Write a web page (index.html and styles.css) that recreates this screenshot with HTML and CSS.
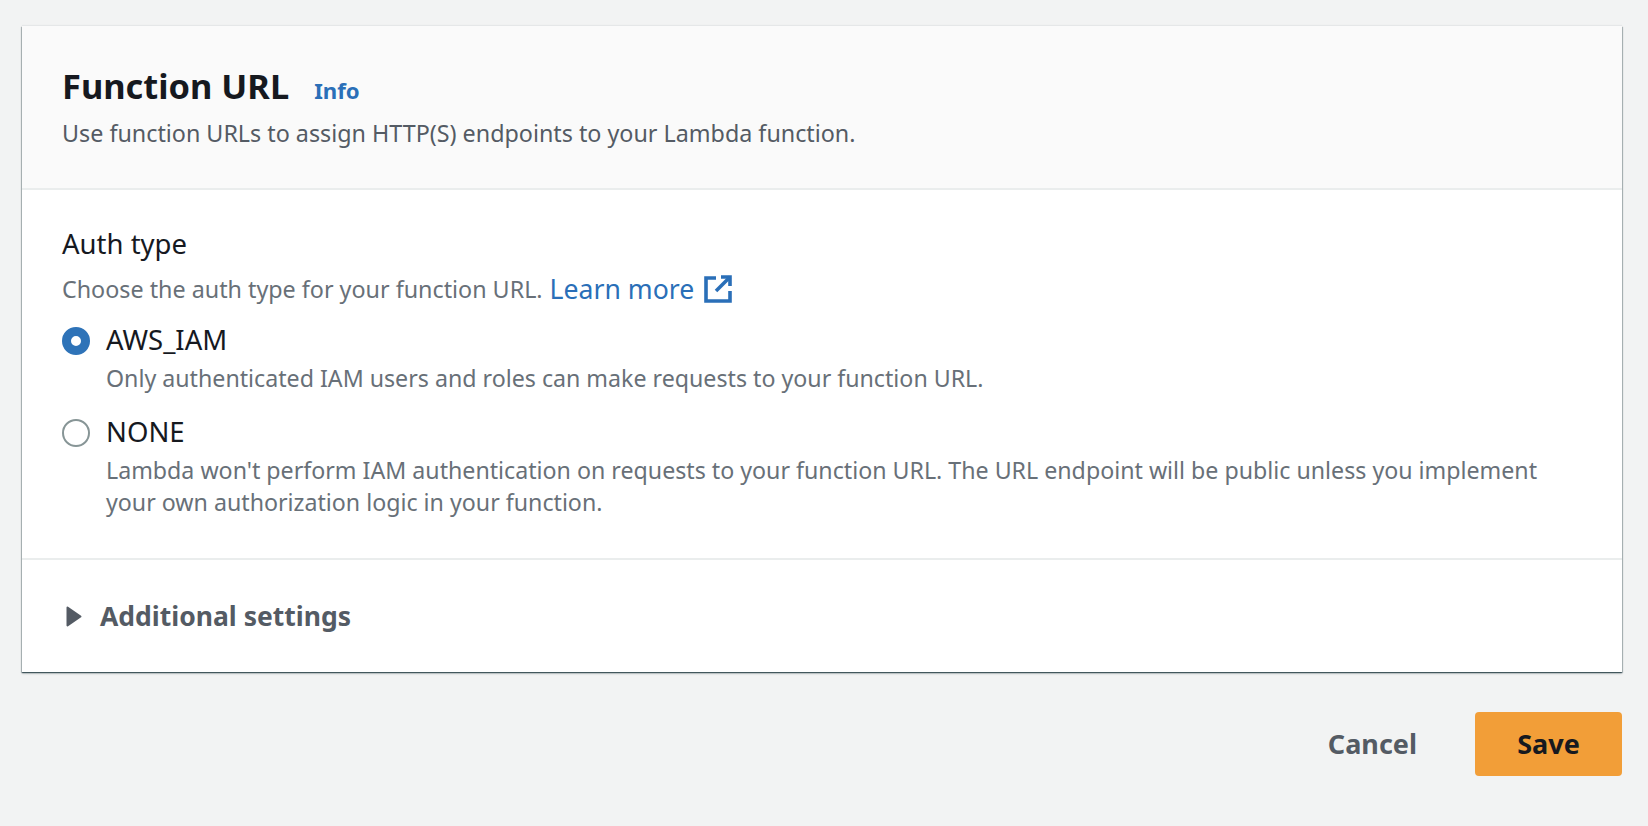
FILE: index.html
```html
<!DOCTYPE html>
<html lang="en">
<head>
<meta charset="utf-8">
<title>Function URL</title>
<link rel="stylesheet" href="styles.css">
</head>
<body>
<main class="page">
  <section class="card">
    <header class="card-head">
      <h2 class="title-row"><span class="title">Function URL</span><a class="info">Info</a></h2>
      <p class="subtitle">Use function URLs to assign HTTP(S) endpoints to your Lambda function.</p>
    </header>
    <div class="card-body">
      <div class="label">Auth type</div>
      <div class="hint"><span>Choose the auth type for your function URL.</span> <a class="learn">Learn more</a>
        <svg class="ext" viewBox="0 0 28 28" width="28" height="28" fill="none" stroke="#2a6fb8" stroke-width="3.6"><path d="M12 3H2v23h24V16"/><path d="M17 2h9v9"/><path d="M26 2L12 16"/></svg>
      </div>
      <div class="radio-row">
        <span class="radio checked"></span>
        <div class="radio-text">
          <div class="radio-label">AWS_IAM</div>
          <div class="radio-desc">Only authenticated IAM users and roles can make requests to your function URL.</div>
        </div>
      </div>
      <div class="radio-row">
        <span class="radio"></span>
        <div class="radio-text">
          <div class="radio-label">NONE</div>
          <div class="radio-desc">Lambda won't perform IAM authentication on requests to your function URL. The URL endpoint will be public unless you implement your own authorization logic in your function.</div>
        </div>
      </div>
    </div>
    <div class="card-foot">
      <svg class="caret" viewBox="0 0 16 21" width="16" height="21"><path d="M1.5 1.5L14.5 10.5L1.5 19.5z" fill="#545b64" stroke="#545b64" stroke-width="2" stroke-linejoin="round"/></svg>
      <span class="more">Additional settings</span>
    </div>
  </section>
  <div class="actions">
    <button class="btn-link">Cancel</button>
    <button class="btn-primary">Save</button>
  </div>
</main>
</body>
</html>
```
FILE: styles.css
```css
* { box-sizing: border-box; }
html, body { margin: 0; height: 100%; }
body { background: #f2f3f3; font-family: "Noto Sans", "Open Sans", sans-serif; color: #16191f; overflow: hidden; }
.page { padding: 26px 26px 0 22px; }
.card { background: #fff; box-shadow: 0 1px 1px 0 rgba(0,28,36,.5), 1px 1px 1px 0 rgba(0,28,36,.2), -1px 1px 1px 0 rgba(0,28,36,.2), 0 2px 2px 0 rgba(0,28,36,.15), 0 -1px 1px 0 rgba(0,28,36,.05); height: 646px; display: flex; flex-direction: column; }
.card-head { background: #fafafa; border-bottom: 2px solid #eaeded; height: 164px; padding: 36px 40px 0; }
.title-row { margin: 0; display: flex; align-items: baseline; gap: 25px; line-height: 48px; }
.title { font-size: 34.4px; font-weight: 700; color: #16191f; }
.info { font-size: 22.2px; font-weight: 700; color: #2a6fb8; }
.subtitle { margin: 2px 0 0; font-size: 23.3px; line-height: 32px; color: #545b64; }
.card-body { flex: 0 0 auto; height: 370px; border-bottom: 2px solid #eaeded; padding: 37px 40px 0; }
.label { font-size: 27.5px; line-height: 34px; color: #16191f; }
.hint { display: flex; align-items: center; gap: 7px; margin-top: 11px; font-size: 23.3px; line-height: 34px; color: #687078; }
.learn { font-size: 26.6px; color: #2a6fb8; }
.ext { margin-left: 3px; }
.radio-row { display: flex; gap: 16px; margin-top: 17px; }
.radio-row + .radio-row { margin-top: 21px; }
.radio { width: 28px; height: 28px; border-radius: 50%; border: 2px solid #879596; margin-top: 4px; background: #fff; flex: none; }
.radio.checked { border: 9px solid #2e73b8; }
.radio-label { font-size: 27.5px; line-height: 34px; color: #16191f; }
.radio-desc { font-size: 23.2px; line-height: 32px; color: #687078; margin-top: 5px; }
.card-foot { flex: 1; display: flex; align-items: center; gap: 18px; padding: 0 40px 0 44px; }
.more { font-size: 26.5px; font-weight: 700; color: #545b64; }
.actions { display: flex; justify-content: flex-end; align-items: center; gap: 58px; margin-top: 40px; }
button { font-family: inherit; font-size: 27px; font-weight: 700; border: 0; cursor: pointer; }
.btn-link { background: none; color: #545b64; padding: 0 0 2px; }
.btn-primary { width: 147px; height: 64px; background: #f29e38; color: #16191f; border-radius: 4px; padding: 0 0 2px; }
```
